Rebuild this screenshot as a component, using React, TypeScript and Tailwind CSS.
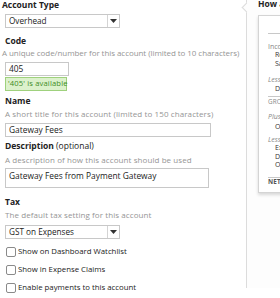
import React from "react";

const Caret = () => (
  <svg width="7" height="4" viewBox="0 0 7 4"><path d="M0 0h7L3.5 4z" fill="#333" /></svg>
);

const Select = ({ value }: { value: string }) => (
  <div className="flex h-[14px] w-[115px] items-stretch border border-[#c8c8c8] bg-white">
    <div className="flex flex-1 items-center whitespace-nowrap pl-[3px] text-[8.2px] text-[#222]">{value}</div>
    <div className="flex w-[12px] items-center justify-center border-l border-[#d4d4d4]">
      <Caret />
    </div>
  </div>
);

const Check = ({ label }: { label: string }) => (
  <div className="flex h-[10px] items-center gap-[2px] pl-[1px]">
    <div className="h-[10px] w-[10px] rounded-[2px] border border-[#8a8a8a] bg-white" />
    <span className="whitespace-nowrap text-[7.8px] text-[#222]">{label}</span>
  </div>
);

const Label = ({ children, className = "" }: { children: React.ReactNode; className?: string }) => (
  <div className={"flex h-[10px] items-center whitespace-nowrap text-[8.5px] text-[#222] " + className}>{children}</div>
);

const Help = ({ children, className = "" }: { children: React.ReactNode; className?: string }) => (
  <div className={"flex h-[10px] items-center whitespace-nowrap text-[8px] text-[#959595] " + className}>{children}</div>
);

const Row = ({ children, className = "" }: { children: React.ReactNode; className?: string }) => (
  <div className={"flex h-[8px] items-center whitespace-nowrap " + className}>{children}</div>
);

export default function App() {
  return (
    <div
      className="flex h-[298px] w-[280px] overflow-hidden bg-white leading-none"
      style={{ fontFamily: '"Open Sans", sans-serif' }}
    >
      <div className="flex w-[246px] shrink-0 flex-col pl-[5px]">
        <Label className="-ml-[3px] mt-0 font-bold">Account Type</Label>
        <div className="mt-[4px]"><Select value="Overhead" /></div>

        <Label className="mt-[8px] font-bold">Code</Label>
        <Help className="-ml-[3px] mt-[2px] tracking-[-0.06px]">A unique code/number for this account (limited to 10 characters)</Help>
        <div className="mt-[4px] flex h-[14px] w-[64px] items-center border border-[#c8c8c8] pl-[3px] text-[8.4px] text-[#222]">405</div>
        <div className="mt-[1px] flex h-[14px] w-[62px] items-center whitespace-nowrap border border-[#9fd17d] bg-[#dcf1cc] pl-[2px] text-[7.6px] tracking-[0.15px] text-[#3d8c1f]">
          '405' is available
        </div>

        <Label className="mt-[5px] font-bold">Name</Label>
        <Help className="mt-[3px] tracking-[0.1px]">A short title for this account (limited to 150 characters)</Help>
        <div className="mt-[4px] flex h-[14px] w-[206px] items-center border border-[#c8c8c8] pl-[3px] text-[8.4px] text-[#222]">Gateway Fees</div>

        <Label className="mt-[4px]">
          <span className="font-bold">Description</span>&nbsp;(optional)
        </Label>
        <Help className="mt-[4px] tracking-[0.08px]">A description of how this account should be used</Help>
        <div className="mt-[3px] h-[20px] w-[204px] whitespace-nowrap border border-[#c8c8c8] pl-[3px] pt-[3px] text-[8.4px] text-[#222]">
          Gateway Fees from Payment Gateway
        </div>

        <Label className="mt-[9px] font-bold">Tax</Label>
        <Help className="mt-[3px] tracking-[0.08px]">The default tax setting for this account</Help>
        <div className="mt-[5px]"><Select value="GST on Expenses" /></div>

        <div className="mt-[8px] flex flex-col gap-[8px]">
          <Check label="Show on Dashboard Watchlist" />
          <Check label="Show in Expense Claims" />
          <Check label="Enable payments to this account" />
        </div>
      </div>

      <div className="relative flex h-[288px] flex-1 flex-col border-l border-[#dcdcdc] bg-[#fdfdfd] pl-[11px]">
        <div className="absolute left-[-4px] top-[4px] h-[7px] w-[7px] rotate-45 border-b border-l border-[#dcdcdc] bg-[#fdfdfd]" />
        <div className="flex h-[8px] items-center whitespace-nowrap text-[8.5px] font-bold text-[#222]">How an account</div>
        <div className="mt-[7px] h-[178px] w-[60px] border border-[#d4d4d4] bg-white pl-[9px] pt-[17px] text-[7px] text-[#333] shadow-[0_2px_3px_rgba(0,0,0,0.15)]">
          <div className="border-t border-[#c8c8c8]" />
          <div className="h-[8px]" />
          <Row className="text-[#888]">Income</Row>
          <Row className="pl-[7px]">Revenue</Row>
          <Row className="mt-[1px] pl-[7px]">Sales</Row>
          <Row className="mt-[8px] italic text-[#888]">Less</Row>
          <Row className="mt-[1px] pl-[7px]">Direct Costs</Row>
          <div className="mt-[4px] border-t border-[#c8c8c8]" />
          <Row className="mt-[1px] text-[6.3px] tracking-wide text-[#888]">GROSS PROFIT</Row>
          <Row className="mt-[6px] italic text-[#888]">Plus</Row>
          <Row className="mt-[2px] pl-[7px]">Other Income</Row>
          <Row className="mt-[5px] italic text-[#888]">Less</Row>
          <Row className="pl-[7px]">Expenses</Row>
          <Row className="mt-[1px] pl-[7px]">Depreciation</Row>
          <Row className="pl-[7px]">Other</Row>
          <div className="mt-[9px] border-t border-[#c8c8c8]" />
          <Row className="text-[6.3px] font-bold tracking-wide text-[#555]">NET PROFIT</Row>
        </div>
      </div>
    </div>
  );
}
